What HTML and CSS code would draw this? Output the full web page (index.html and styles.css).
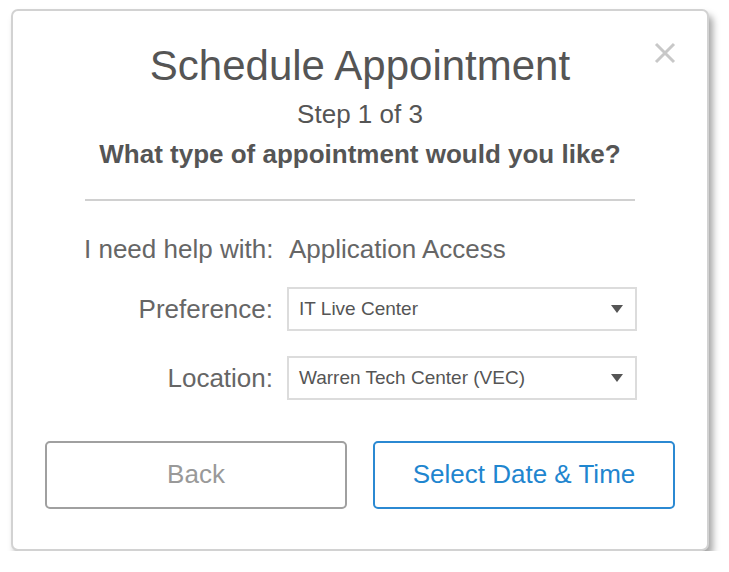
FILE: index.html
```html
<!DOCTYPE html>
<html lang="en">
<head>
    <meta charset="UTF-8">
    <meta name="viewport" content="width=device-width, initial-scale=1.0">
    <title>Schedule Appointment</title>
    <link rel="stylesheet" href="styles.css">
</head>
<body>
    <div class="modal">
        <button class="close" aria-label="Close">
            <svg width="22" height="22" viewBox="0 0 22 22">
                <path d="M2 2 L20 20 M20 2 L2 20" stroke="#c8c8c8" stroke-width="3" fill="none"/>
            </svg>
        </button>
        <div class="header">
            <h1>Schedule Appointment</h1>
            <p class="step">Step 1 of 3</p>
            <p class="question">What type of appointment would you like?</p>
        </div>
        <div class="form">
            <div class="row">
                <span class="label">I need help with:</span>
                <span class="value">Application Access</span>
            </div>
            <div class="row">
                <span class="label">Preference:</span>
                <div class="select">
                    <span>IT Live Center</span>
                    <span class="arrow"></span>
                </div>
            </div>
            <div class="row">
                <span class="label">Location:</span>
                <div class="select">
                    <span>Warren Tech Center (VEC)</span>
                    <span class="arrow"></span>
                </div>
            </div>
        </div>
        <div class="actions">
            <button class="btn btn-back">Back</button>
            <button class="btn btn-next">Select Date &amp; Time</button>
        </div>
    </div>
</body>
</html>
```

FILE: styles.css
```css
body {
    font-family: "Liberation Sans", Arial, sans-serif;
    margin: 0;
    background-color: #ffffff;
    color: #555;
}
.modal {
    position: relative;
    box-sizing: border-box;
    width: 698px;
    height: 542px;
    margin: 9px 0 0 11px;
    border: 2px solid #d2d2d2;
    border-radius: 7px;
    background-color: #fff;
    box-shadow: 4px 6px 7px rgba(0, 0, 0, 0.35);
}
.close {
    position: absolute;
    top: 31px;
    right: 31px;
    width: 22px;
    height: 22px;
    padding: 0;
    border: none;
    background: none;
}
.header {
    text-align: center;
    padding-top: 32px;
    margin: 0 72px;
    border-bottom: 2px solid #d0d0d0;
    padding-bottom: 30px;
}
h1 {
    font-size: 42px;
    font-weight: normal;
    line-height: 46px;
    margin: 0;
    color: #555;
}
.step {
    font-size: 26px;
    line-height: 30px;
    margin: 10px 0 0;
}
.question {
    font-size: 26px;
    font-weight: bold;
    line-height: 30px;
    margin: 10px 0 0;
}
.form {
    padding: 33px 0 0 71px;
}
.row {
    display: flex;
    align-items: center;
    margin-bottom: 25px;
}
.row:first-child {
    margin-bottom: 23px;
}
.label {
    flex-shrink: 0;
    width: 189px;
    text-align: right;
    white-space: nowrap;
    font-size: 26px;
    line-height: 30px;
    color: #666;
}
.value {
    font-size: 26px;
    line-height: 30px;
    color: #666;
    margin-left: 16px;
}
.select {
    box-sizing: border-box;
    width: 350px;
    height: 44px;
    margin-left: 14px;
    border: 2px solid #dcdcdc;
    display: flex;
    align-items: center;
    justify-content: space-between;
    padding: 0 12px 0 10px;
    font-size: 19px;
    color: #555;
}
.arrow {
    width: 0;
    height: 0;
    border-left: 6px solid transparent;
    border-right: 6px solid transparent;
    border-top: 8px solid #555;
}
.actions {
    display: flex;
    gap: 26px;
    padding: 16px 0 0 32px;
}
.btn {
    box-sizing: border-box;
    width: 302px;
    height: 68px;
    padding-bottom: 3px;
    background: #fff;
    border-radius: 5px;
    font-family: "Liberation Sans", Arial, sans-serif;
    font-size: 26px;
}
.btn-back {
    border: 2px solid #a0a0a0;
    color: #999;
}
.btn-next {
    border: 2px solid #2b89d2;
    color: #1f86cf;
}
```
